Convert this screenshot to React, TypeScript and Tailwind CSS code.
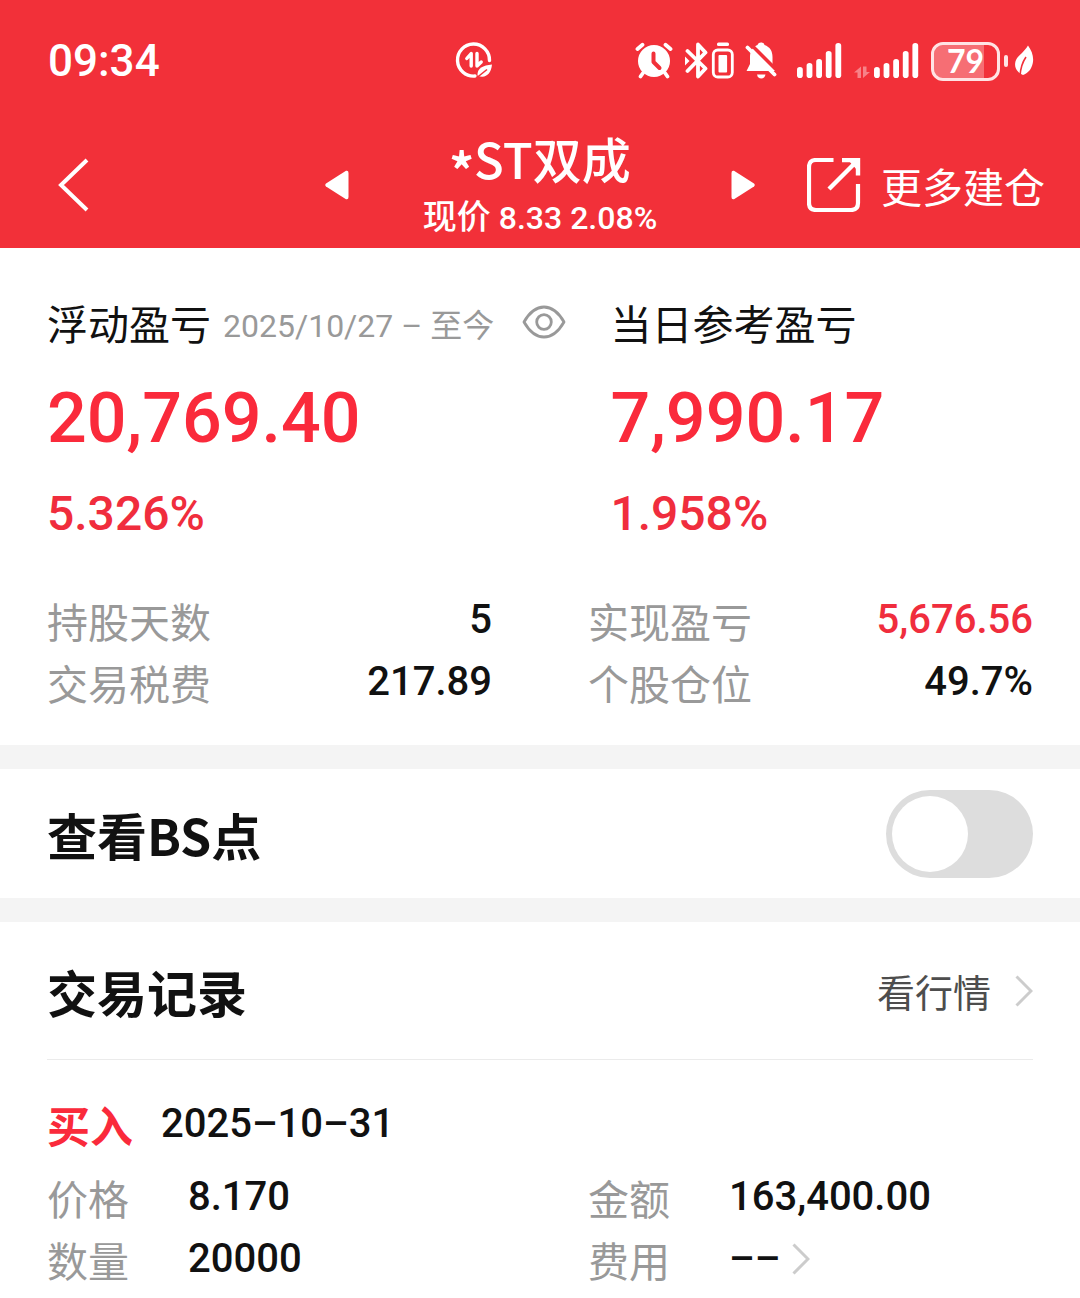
import { useState, type ReactNode } from "react";

const BATTERY_LEVEL = 79;

const STATS = [
  { label: "持股天数", value: "5", red: false },
  { label: "实现盈亏", value: "5,676.56", red: true },
  { label: "交易税费", value: "217.89", red: false },
  { label: "个股仓位", value: "49.7%", red: false },
];

function DataSaverIcon() {
  return (
    <svg width="40" height="40" viewBox="0 0 40 40" fill="none" aria-hidden>
      <path d="M21 35A16 16 0 1 1 35.5 19.5" stroke="white" strokeWidth="3.4" strokeLinecap="round" />
      <path d="M12.8 17.5L17.2 12.5V25" stroke="white" strokeWidth="3.4" strokeLinejoin="round" strokeLinecap="round" />
      <path d="M23 12.5V25L27.2 21" stroke="white" strokeWidth="3.4" strokeLinejoin="round" strokeLinecap="round" />
      <path d="M38 23.5C29 24.5 23 27 23.5 34.5C31 38 37 33.5 38 23.5Z" fill="white" />
      <path d="M23 36.5L33 28.5" stroke="#f23039" strokeWidth="1.6" />
    </svg>
  );
}

function AlarmIcon() {
  return (
    <svg width="38" height="40" viewBox="0 0 38 40" fill="none" strokeLinecap="round" aria-hidden>
      <circle cx="19" cy="20" r="16" fill="white" />
      <path d="M2.5 8L7.5 3.8M30.5 3.8L35.5 8" stroke="white" strokeWidth="3.8" />
      <path d="M8 32L5.5 35.5M30 32L32.5 35.5" stroke="white" strokeWidth="3.8" />
      <path d="M18.5 12.5V21L24.5 27" stroke="#f23039" strokeWidth="4" strokeLinejoin="round" />
    </svg>
  );
}

function BluetoothIcon() {
  return (
    <svg width="24" height="40" viewBox="0 0 24 40" fill="none" aria-hidden>
      <path
        d="M2.5 10L20.5 27.5L13 35.5V3.5L20.5 11.5L2.5 30"
        stroke="white"
        strokeWidth="3.8"
        strokeLinecap="round"
        strokeLinejoin="round"
      />
      <path d="M0 15.5L4.5 20L0 24.5Z" fill="white" />
    </svg>
  );
}

function DeviceBatteryIcon() {
  return (
    <svg width="24" height="40" viewBox="0 0 24 40" fill="none" aria-hidden>
      <rect x="6" y="1.5" width="12" height="3.5" rx="1.5" fill="white" />
      <rect x="2.3" y="9" width="19" height="27" rx="4.5" stroke="white" strokeWidth="2.8" />
      <rect x="7.5" y="14" width="8.6" height="17.5" rx="1" fill="white" />
    </svg>
  );
}

function MutedBellIcon() {
  return (
    <svg width="32" height="40" viewBox="0 0 32 40" fill="none" aria-hidden>
      <path
        d="M16 1.5C18 1.5 19 2.5 19.5 4C25 6 27.5 10 27.5 16V23L31 30H1.5L5 23V16C5 10 8 6 12.5 4C13 2.5 14 1.5 16 1.5Z"
        fill="white"
      />
      <path d="M12 33.5H20.500C20 36 18.5 37.5 16.3 37.5C14 37.5 12.5 36 12 33.5Z" fill="white" />
      <path d="M5.5 3L34 31.5" stroke="#f23039" strokeWidth="3.4" />
      <path d="M2.5 6.5L29.5 33.5" stroke="white" strokeWidth="3.8" strokeLinecap="round" />
    </svg>
  );
}

function SignalIcon() {
  const tops = [26, 22, 18, 10, 2];
  return (
    <svg width="45" height="40" viewBox="0 0 45 40" fill="white" aria-hidden>
      {tops.map((top, i) => (
        <rect key={top} x={i * 9.6} y={top} width="5.8" height={37 - top} rx="2.8" />
      ))}
    </svg>
  );
}

function DataArrowsIcon() {
  return (
    <svg width="16" height="40" viewBox="0 0 16 40" fill="white" fillOpacity="0.4" aria-hidden>
      <path d="M0 31.5L7 25.5V37H3.5V31.5ZM9 25.5H12.5V31H16L9 37Z" />
    </svg>
  );
}

function LeafIcon() {
  return (
    <svg width="20" height="40" viewBox="0 0 20 40" fill="none" aria-hidden>
      <path d="M14 4.5C18 10 20 16 18.8 22C17.5 28.5 14 32 9 34C3 31.5 0.5 27 1.2 22C2 15 9 13 14 4.5Z" fill="white" />
      <path d="M6 35C6.5 27 8.5 21 12 16" stroke="#f23039" strokeWidth="1.6" />
    </svg>
  );
}

function Battery() {
  return (
    <div className="flex items-center gap-1">
      <div className="relative flex h-[39px] w-[69px] items-center justify-center overflow-hidden rounded-xl border-[3px] border-[#ffe3e4]">
        <div className="absolute inset-y-0 left-0 bg-white/30" style={{ width: `${BATTERY_LEVEL}%` }} />
        <span className="relative font-[Lato,sans-serif] text-[32px] leading-8 font-bold">{BATTERY_LEVEL}</span>
      </div>
      <div className="h-3 w-1 rounded-full bg-[#ffe3e4]" />
    </div>
  );
}

function StatusBar() {
  return (
    <div className="flex h-[122px] items-center pr-[46px] pl-12">
      <span className="flex-1 text-[44px] leading-none font-medium">09:34</span>
      <div className="mr-[141px]">
        <DataSaverIcon />
      </div>
      <div className="flex items-center">
        <AlarmIcon />
        <div className="ml-3 flex gap-0.5">
          <BluetoothIcon />
          <DeviceBatteryIcon />
        </div>
        <div className="ml-2.5">
          <MutedBellIcon />
        </div>
        <div className="ml-5">
          <SignalIcon />
        </div>
        <div className="mr-3 ml-3 flex gap-1">
          <DataArrowsIcon />
          <SignalIcon />
        </div>
        <Battery />
        <div className="ml-1.5">
          <LeafIcon />
        </div>
      </div>
    </div>
  );
}

function Chevron({ className }: { className?: string }) {
  return (
    <svg className={className} width="18" height="32" viewBox="0 0 18 32" fill="none" aria-hidden>
      <path d="M1.5 1.5L16 16L1.5 30.5" stroke="currentColor" strokeWidth="3" />
    </svg>
  );
}

function NavBar() {
  return (
    <nav className="grid h-[126px] grid-cols-[1fr_430px_1fr] items-center">
      <button type="button" aria-label="返回" className="ml-[57px] justify-self-start">
        <svg width="32" height="56" viewBox="0 0 32 56" fill="none" aria-hidden>
          <path d="M30 3L4 28L30 53" stroke="white" strokeWidth="4" />
        </svg>
      </button>

      <div className="flex items-center justify-between">
        <button type="button" aria-label="上一只">
          <svg width="24" height="30" viewBox="0 0 24 30" fill="white" aria-hidden>
            <path d="M21 .8Q23.5 0 23.5 3V27Q23.5 30 21 29.2L1 16.5Q-.5 15 1 13.5Z" />
          </svg>
        </button>
        <div className="flex flex-col items-center">
          <h1 className="font-['Noto_Sans_CJK_SC',sans-serif] text-[49px] leading-[60px] font-medium">
            <span className="align-sub leading-none font-bold">*</span>ST双成
          </h1>
          <p className="text-[32px] leading-[48px] font-medium">
            <span className="text-[34px]">现价</span> 8.33 2.08%
          </p>
        </div>
        <button type="button" aria-label="下一只">
          <svg width="24" height="30" viewBox="0 0 24 30" fill="white" aria-hidden>
            <path d="M3 .8Q.5 0 .5 3V27Q.5 30 3 29.2L23 16.5Q24.5 15 23 13.5Z" />
          </svg>
        </button>
      </div>

      <button type="button" className="mr-[35px] flex items-center gap-5 justify-self-end">
        <svg width="54" height="54" viewBox="0 0 54 54" fill="none" aria-hidden>
          <path d="M26.5 2H9Q2 2 2 9V45Q2 52 9 52H44Q51 52 51 45V26" stroke="white" strokeWidth="4.2" />
          <path d="M35 2H51V17.5M50 3L22 31" stroke="white" strokeWidth="4.4" />
          <path d="M41 2H51V13Z" fill="white" />
        </svg>
        <span className="font-['Noto_Sans_CJK_SC',sans-serif] text-[41px] leading-[56px]">更多建仓</span>
      </button>
    </nav>
  );
}

function EyeIcon() {
  return (
    <svg width="44" height="34" viewBox="0 0 44 34" fill="none" stroke="#999999" strokeWidth="2.8" aria-hidden>
      <path d="M2 17C8 6.5 14 2 22 2S36 6.5 42 17C36 27.5 30 32 22 32S8 27.5 2 17Z" strokeLinejoin="round" />
      <circle cx="22" cy="17" r="7.3" />
    </svg>
  );
}

function Summary() {
  return (
    <section className="px-[47px] pt-[46px] pb-8">
      <div className="grid grid-cols-[4fr_3fr]">
        <div>
          <div className="flex h-14 items-center whitespace-nowrap">
            <h2 className="font-['Noto_Sans_CJK_SC',sans-serif] text-[41px] leading-[56px]">浮动盈亏</h2>
            <span className="mt-2 ml-3 text-[32px] leading-[48px] text-[#999999]">2025/10/27 – 至今</span>
            <button type="button" aria-label="隐藏金额" className="ml-7">
              <EyeIcon />
            </button>
          </div>
          <p className="mt-6 text-[70px] leading-[88px] font-medium text-[#fa2a3b]">20,769.40</p>
          <p className="mt-6 text-[48px] leading-[56px] font-medium text-[#f02d3d]">5.326%</p>
        </div>
        <div>
          <h2 className="font-['Noto_Sans_CJK_SC',sans-serif] text-[41px] leading-[56px]">当日参考盈亏</h2>
          <p className="mt-6 text-[70px] leading-[88px] font-medium text-[#fa2a3b]">7,990.17</p>
          <p className="mt-6 text-[48px] leading-[56px] font-medium text-[#f02d3d]">1.958%</p>
        </div>
      </div>

      <dl className="mt-[47px] grid grid-cols-2 gap-x-24">
        {STATS.map((stat) => (
          <div key={stat.label} className="flex h-[62px] items-center justify-between">
            <dt className="font-['Noto_Sans_CJK_SC',sans-serif] text-[41px] leading-[56px] text-[#999999]">
              {stat.label}
            </dt>
            <dd
              className={
                stat.red
                  ? "text-[40px] leading-[56px] font-medium text-[#f02d3d]"
                  : "text-[40px] leading-[56px] font-medium"
              }
            >
              {stat.value}
            </dd>
          </div>
        ))}
      </dl>
    </section>
  );
}

function BsSwitch() {
  const [on, setOn] = useState(false);

  return (
    <section className="flex items-center justify-between px-[47px] pt-[21px] pb-5">
      <label htmlFor="bs" className="font-['Noto_Sans_CJK_SC',sans-serif] text-[50px] leading-[64px] font-bold">
        查看BS点
      </label>
      <span className="relative h-[88px] w-[147px]">
        <input
          id="bs"
          type="checkbox"
          role="switch"
          checked={on}
          onChange={(e) => setOn(e.target.checked)}
          className="h-full w-full appearance-none rounded-full bg-[#dddddd] checked:bg-[#f23039]"
        />
        <span
          className={
            on
              ? "pointer-events-none absolute top-1.5 right-1.5 size-[76px] rounded-full bg-white"
              : "pointer-events-none absolute top-1.5 left-1.5 size-[76px] rounded-full bg-white"
          }
        />
      </span>
    </section>
  );
}

function Field({ label, children }: { label: string; children: ReactNode }) {
  return (
    <div className="flex h-[62px] items-center">
      <dt className="w-[141px] font-['Noto_Sans_CJK_SC',sans-serif] text-[41px] leading-[56px] text-[#999999]">
        {label}
      </dt>
      <dd className="flex items-center text-[40px] leading-[56px] font-medium">{children}</dd>
    </div>
  );
}

function TradeRecords() {
  return (
    <section className="px-[47px]">
      <div className="flex h-[138px] items-center justify-between border-b border-[#ebebeb]">
        <h2 className="font-['Noto_Sans_CJK_SC',sans-serif] text-[50px] leading-[64px] font-bold">交易记录</h2>
        <a
          href="#quotes"
          className="flex items-center gap-6 font-['Noto_Sans_CJK_SC',sans-serif] text-[38px] leading-[56px] text-[#4d4d4d]"
        >
          看行情
          <Chevron className="text-[#cccccc]" />
        </a>
      </div>

      <article className="pt-8">
        <div className="flex h-16 items-center gap-7">
          <span className="font-['Noto_Sans_CJK_SC',sans-serif] text-[43px] leading-[56px] font-bold text-[#fa2a3b]">
            买入
          </span>
          <time dateTime="2025-10-31" className="text-[40px] leading-[56px] font-medium">
            2025–10–31
          </time>
        </div>
        <dl className="mt-2.5 grid grid-cols-2 gap-x-24">
          <Field label="价格">8.170</Field>
          <Field label="金额">163,400.00</Field>
          <Field label="数量">20000</Field>
          <Field label="费用">
            ––
            <Chevron className="ml-3 text-[#cccccc]" />
          </Field>
        </dl>
      </article>
    </section>
  );
}

export default function App() {
  return (
    <main className="min-h-screen bg-white font-[Roboto,'Noto_Sans_CJK_SC',sans-serif] text-[#111111]">
      <header className="bg-[#f23039] text-white">
        <StatusBar />
        <NavBar />
      </header>
      <Summary />
      <div className="h-6 bg-[#f4f4f4]" />
      <BsSwitch />
      <div className="h-6 bg-[#f4f4f4]" />
      <TradeRecords />
    </main>
  );
}
